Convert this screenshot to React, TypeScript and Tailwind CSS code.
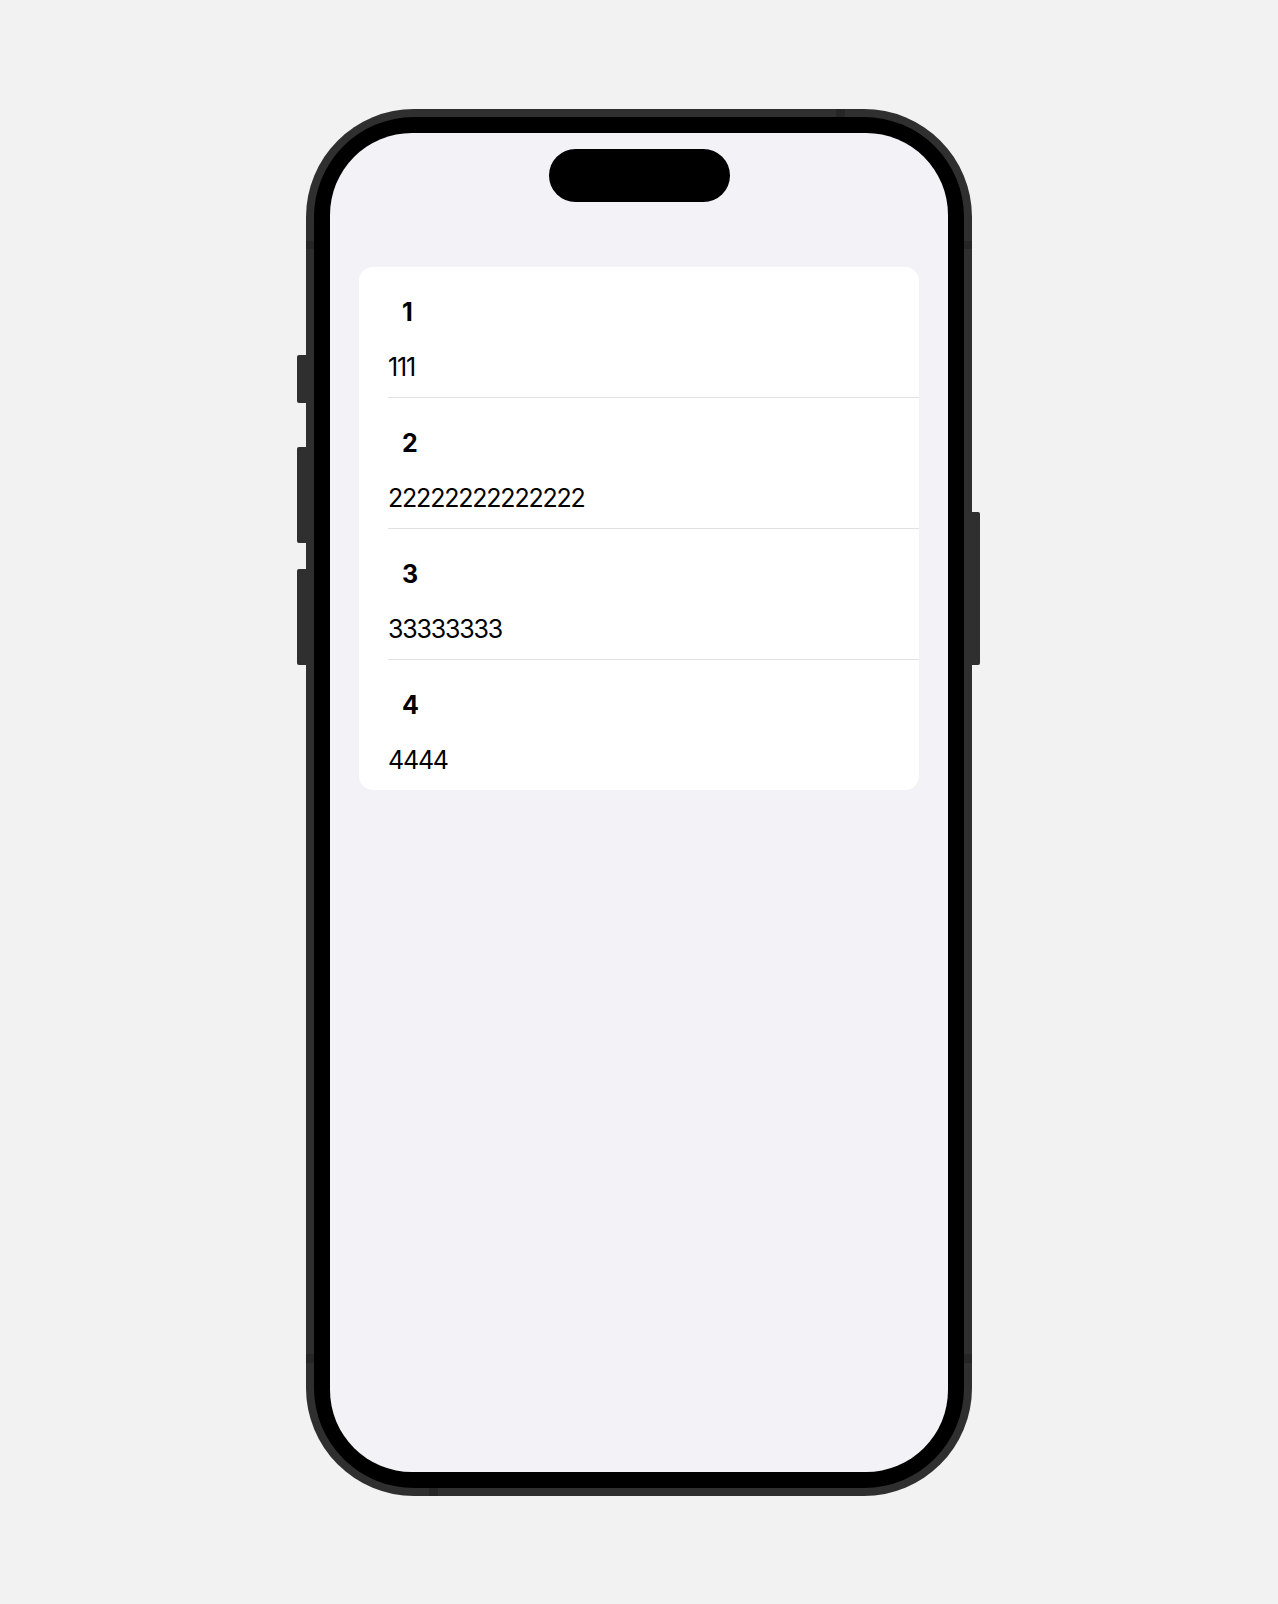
const items = [
  { title: "1", body: "111" },
  { title: "2", body: "22222222222222" },
  { title: "3", body: "33333333" },
  { title: "4", body: "4444" },
];

const App = () => {
  return (
    <div className="flex h-[1604px] w-full items-center justify-center bg-[#f2f2f2] font-['Inter',sans-serif]">
      {/* Phone */}
      <div className="relative h-[1387px] w-[666px] rounded-[108px] bg-[#2f2f2f] p-[8px]">
        {/* Side buttons */}
        <div className="absolute left-[-9px] top-[246px] h-[48px] w-[9px] rounded-l-[2px] bg-[#2f2f2f]" />
        <div className="absolute left-[-9px] top-[338px] h-[96px] w-[9px] rounded-l-[2px] bg-[#2f2f2f]" />
        <div className="absolute left-[-9px] top-[460px] h-[96px] w-[9px] rounded-l-[2px] bg-[#2f2f2f]" />
        <div className="absolute right-[-8px] top-[403px] h-[153px] w-[8px] rounded-r-[2px] bg-[#2f2f2f]" />

        {/* Antenna marks */}
        <div className="absolute left-[530px] top-0 h-[8px] w-[9px] bg-[#262626]" />
        <div className="absolute left-[123px] bottom-0 h-[8px] w-[9px] bg-[#262626]" />
        <div className="absolute left-0 top-[132px] h-[8px] w-[8px] bg-[#262626]" />
        <div className="absolute right-0 top-[132px] h-[8px] w-[8px] bg-[#262626]" />
        <div className="absolute left-0 bottom-[133px] h-[9px] w-[8px] bg-[#262626]" />
        <div className="absolute right-0 bottom-[133px] h-[9px] w-[8px] bg-[#262626]" />

        <div className="h-full w-full rounded-[100px] bg-black p-[16px]">
          {/* Screen */}
          <div className="flex h-full w-full flex-col items-center overflow-hidden rounded-[82px] bg-[#f2f2f7] pt-[16px]">
            {/* Dynamic island */}
            <div className="h-[53px] w-[181px] rounded-full bg-black" />

            {/* List */}
            <div className="mt-[65px] w-[560px] rounded-[14px] bg-white">
              {items.map((item, i) => (
                <div key={item.title} className="pl-[29px]">
                  <div className="flex h-[130px] flex-col pt-[30px] text-black">
                    <p className="pl-[14px] text-[25px] font-bold leading-[30px]">
                      {item.title}
                    </p>
                    <p className="mt-[25px] text-[25px] leading-[30px] tracking-[-1.2px]">
                      {item.body}
                    </p>
                  </div>
                  {i < items.length - 1 && <div className="h-px w-full bg-[#e0e0e5]" />}
                </div>
              ))}
            </div>
          </div>
        </div>
      </div>
    </div>
  );
};

export default App;
